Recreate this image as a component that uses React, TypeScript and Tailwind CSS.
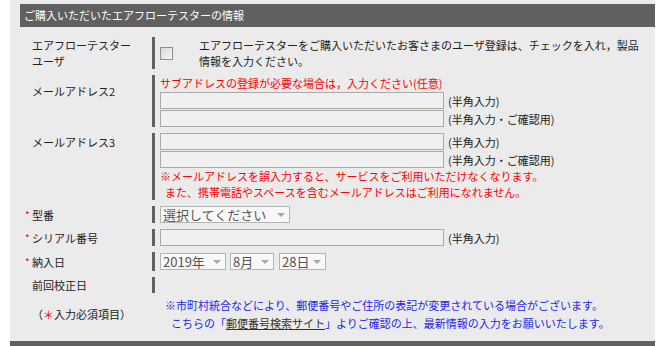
import React from 'react';

type RowProps = {
  label?: React.ReactNode;
  req?: boolean;
  labelClass?: string;
  contentClass?: string;
  children?: React.ReactNode;
};

const Row: React.FC<RowProps> = ({ label, req, labelClass = '', contentClass = '', children }) => (
  <div className="flex">
    <div className={`w-[142px] shrink-0 ${req ? 'pl-[15px]' : 'pl-[22px]'} ${labelClass}`}>
      {req && <span className="inline-block w-[7px] text-[#ff0000] text-[10px]">*</span>}
      {label}
    </div>
    <div className={`flex-1 border-l-[3px] border-[#606060] pl-[5px] ${contentClass}`}>{children}</div>
  </div>
);

const TextInput: React.FC = () => (
  <input type="text" className="block w-[284px] h-[17px] border border-[#a9a9a9] bg-[#f0f0f0] outline-none" />
);

const Select: React.FC<{ widthClass: string; value: string; options: string[] }> = ({ widthClass, value, options }) => (
  <div className={`relative ${widthClass}`}>
    <select
      defaultValue={value}
      className="appearance-none block w-full h-[17px] border border-[#b4b4b4] bg-[#f8f8f8] text-[#555] text-[13px] leading-[15px] pl-[2px] outline-none"
    >
      {options.map(o => <option key={o} value={o}>{o}</option>)}
    </select>
    <span className="pointer-events-none absolute right-[5px] top-[7px] w-0 h-0 border-l-[4px] border-r-[4px] border-t-[4px] border-l-transparent border-r-transparent border-t-[#a8a8a8]" />
  </div>
);

const App: React.FC = () => {
  return (
    <div className="w-[662px] h-[346px] bg-white overflow-hidden font-['Noto_Sans_CJK_JP','Noto_Sans',sans-serif] text-[11px] text-[#222]">
      <div className="ml-[10px] w-[645px] h-[341px] bg-[#ebebeb] pt-[4px]">
        <div className="ml-[10px] h-[23px] bg-[#606060] text-white pl-[4px] flex items-center text-[11px]">
          ご購入いただいたエアフローテスターの情報
        </div>

        <div className="mt-[10px] flex flex-col gap-[6px] leading-[16px]">
          <Row
            label={<>エアフローテスター<br />ユーザ</>}
            contentClass="flex items-center h-[32px]"
          >
            <input
              type="checkbox"
              className="appearance-none w-[13px] h-[13px] border border-[#8f8f8f] bg-gradient-to-br from-[#d8d8d8] to-[#f6f6f6] shrink-0"
            />
            <div className="ml-[26px] leading-[16px]">
              エアフローテスターをご購入いただいたお客さまのユーザ登録は、チェックを入れ，製品<br />
              情報を入力ください。
            </div>
          </Row>

          <Row label="メールアドレス2" labelClass="pt-[8px]">
            <div className="text-[#ff0000] h-[17px] leading-[17px]">サブアドレスの登録が必要な場合は，入力ください(任意)</div>
            <div className="flex items-center gap-[4px]">
              <TextInput />
              <span>(半角入力)</span>
            </div>
            <div className="flex items-center gap-[4px] mt-[1px]">
              <TextInput />
              <span>(半角入力・ご確認用)</span>
            </div>
          </Row>

          <Row label="メールアドレス3" labelClass="pt-[1px]">
            <div className="flex items-center gap-[4px]">
              <TextInput />
              <span>(半角入力)</span>
            </div>
            <div className="flex items-center gap-[4px] mt-[1px]">
              <TextInput />
              <span>(半角入力・ご確認用)</span>
            </div>
            <div className="text-[#ff0000] leading-[16px]">
              <div>※メールアドレスを誤入力すると、サービスをご利用いただけなくなります。</div>
              <div className="pl-[5px]">また、携帯電話やスペースを含むメールアドレスはご利用になれません。</div>
            </div>
          </Row>

          <Row label="型番" req labelClass="flex items-center" contentClass="flex items-center h-[17px]">
            <Select widthClass="w-[130px]" value="選択してください" options={['選択してください']} />
          </Row>

          <Row label="シリアル番号" req labelClass="flex items-center" contentClass="flex items-center gap-[4px] h-[17px]">
            <TextInput />
            <span>(半角入力)</span>
          </Row>

          <Row label="納入日" req labelClass="flex items-center" contentClass="flex items-center gap-[4px] h-[19px]">
            <Select widthClass="w-[66px]" value="2019年" options={['2019年']} />
            <Select widthClass="w-[44px]" value="8月" options={['8月']} />
            <Select widthClass="w-[47px] ml-[1px]" value="28日" options={['28日']} />
          </Row>

          <Row label="前回校正日" labelClass="flex items-center" contentClass="h-[16px]" />
        </div>

        <div className="flex mt-[3px]">
          <div className="w-[145px] shrink-0 pl-[22px] flex items-center leading-[18px]">
            （<span className="text-[#ff0000]">＊</span>入力必須項目）
          </div>
          <div className="pl-[10px] text-[#2424f0] leading-[18px]">
            <div>※市町村統合などにより、郵便番号やご住所の表記が変更されている場合がございます。</div>
            <div className="pl-[6px]">
              こちらの「<span className="text-[#333] underline">郵便番号検索サイト</span>」よりご確認の上、最新情報の入力をお願いいたします。
            </div>
          </div>
        </div>
      </div>
      <div className="ml-[10px] w-[645px] h-[5px] bg-[#606060]" />
    </div>
  );
};

export default App;
